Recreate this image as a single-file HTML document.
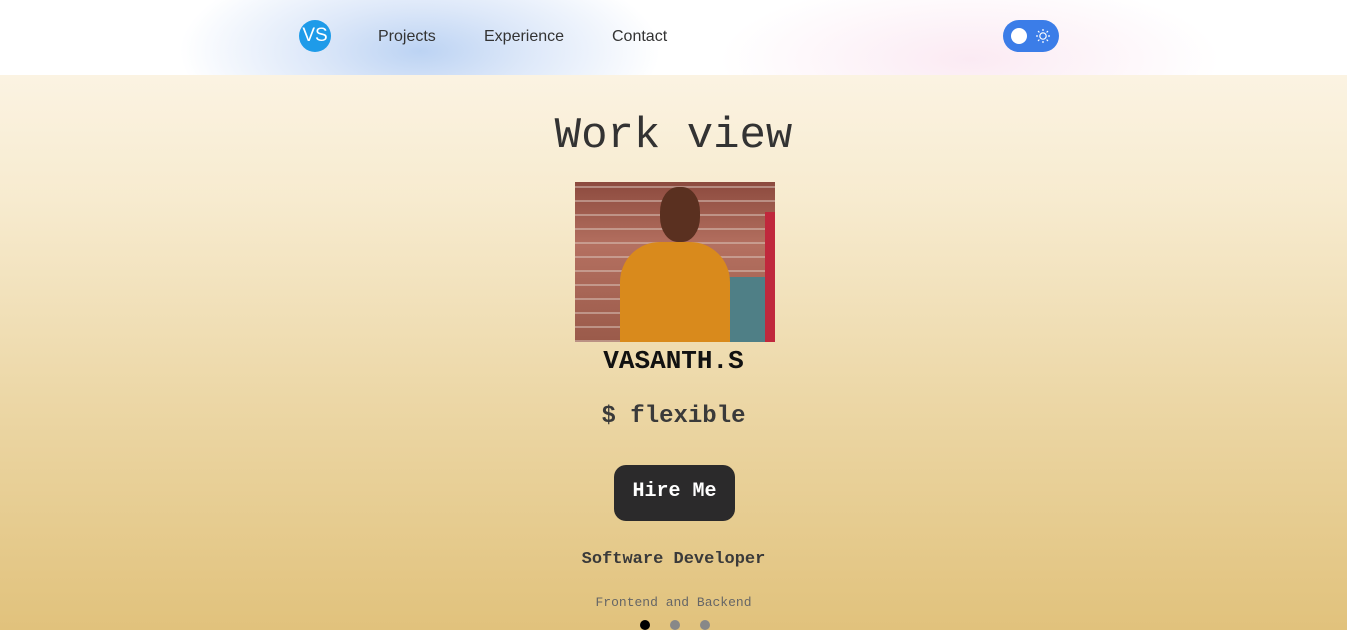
<!DOCTYPE html>
<html><head><style>
*{margin:0;padding:0;box-sizing:border-box}
body{width:1347px;height:630px;overflow:hidden;font-family:"Liberation Sans",sans-serif;background:linear-gradient(#fbf3e2 75px,#f7ebcf 200px,#ecd7a6 400px,#e1c27c 630px)}
.nav{position:absolute;left:0;top:0;width:1347px;height:75px;background:#fff;overflow:hidden}
.blob1{position:absolute;left:180px;top:-110px;width:480px;height:260px;background:radial-gradient(closest-side at 50% 62%,#bcd3f3 0%,#dde8f9 45%,rgba(255,255,255,0) 100%)}
.blob2{position:absolute;left:720px;top:-90px;width:500px;height:230px;background:radial-gradient(closest-side at 50% 65%,#fbeaf3 0%,rgba(255,255,255,0) 100%)}
.logo{position:absolute;left:299px;top:20px;width:32px;height:32px;border-radius:50%;background:#1e9be9;color:#fff;font-size:19px;line-height:32px;text-align:center}
.link{position:absolute;top:28px;font-size:16px;color:#333}
.tog{position:absolute;left:1003px;top:20px;width:56px;height:32px;border-radius:16px;background:#3b7de8}
.tog .k{position:absolute;left:8px;top:8px;width:16px;height:16px;border-radius:50%;background:#fff}
.mono{font-family:"Liberation Mono",monospace;font-weight:bold;position:absolute;width:1347px;text-align:center}
.photo{position:absolute;left:575px;top:182px;width:200px;height:160px;overflow:hidden;background:linear-gradient(180deg,#8c4a3e,#b47060 40%,#9a5a4a)}
</style></head><body>
<div class="nav">
<div class="blob1"></div><div class="blob2"></div>
<div class="logo">VS</div>
<div class="link" style="left:378px">Projects</div>
<div class="link" style="left:484px">Experience</div>
<div class="link" style="left:612px">Contact</div>
<div class="tog"><div class="k"></div>
<svg style="position:absolute;left:32px;top:8px" width="16" height="16" viewBox="0 0 16 16" stroke="#fff" stroke-width="1.2" fill="none"><circle cx="8" cy="8" r="3.2"/><path d="M8 1v2M8 13v2M1 8h2M13 8h2M3 3l1.4 1.4M11.6 11.6L13 13M3 13l1.4-1.4M11.6 4.4L13 3"/></svg></div>
</div>
<div class="mono" style="top:111px;font-size:44px;font-weight:normal;color:#333">Work view</div>
<div class="photo">
<div style="position:absolute;inset:0;background:repeating-linear-gradient(0deg,rgba(220,200,190,.5) 0 2px,transparent 2px 14px)"></div>
<div style="position:absolute;left:135px;top:95px;width:70px;height:65px;background:#4f7f86;border-radius:8px"></div>
<div style="position:absolute;left:190px;top:30px;width:10px;height:130px;background:#c0283c"></div>
<div style="position:absolute;left:45px;top:60px;width:110px;height:100px;background:#d98a1c;border-radius:40px 40px 0 0"></div>
<div style="position:absolute;left:85px;top:5px;width:40px;height:55px;background:#5a3020;border-radius:45%"></div>
</div>
<div class="mono" style="top:346px;font-size:26px;color:#111">VASANTH.S</div>
<div class="mono" style="top:403px;font-size:24px;color:#3a3a3a">$ flexible</div>
<div style="position:absolute;left:614px;top:465px;width:121px;height:56px;border-radius:12px;background:#2b2a2b;color:#fff;font-family:'Liberation Mono',monospace;font-weight:bold;font-size:20px;line-height:54px;text-align:center">Hire Me</div>
<div class="mono" style="top:550px;font-size:17px;color:#3a3a3a">Software Developer</div>
<div class="mono" style="top:595px;font-size:13px;font-weight:normal;color:#666">Frontend and Backend</div>
<div style="position:absolute;left:640px;top:620px;width:10px;height:10px;border-radius:50%;background:#000"></div>
<div style="position:absolute;left:670px;top:620px;width:10px;height:10px;border-radius:50%;background:#888"></div>
<div style="position:absolute;left:700px;top:620px;width:10px;height:10px;border-radius:50%;background:#888"></div>
</body></html>
